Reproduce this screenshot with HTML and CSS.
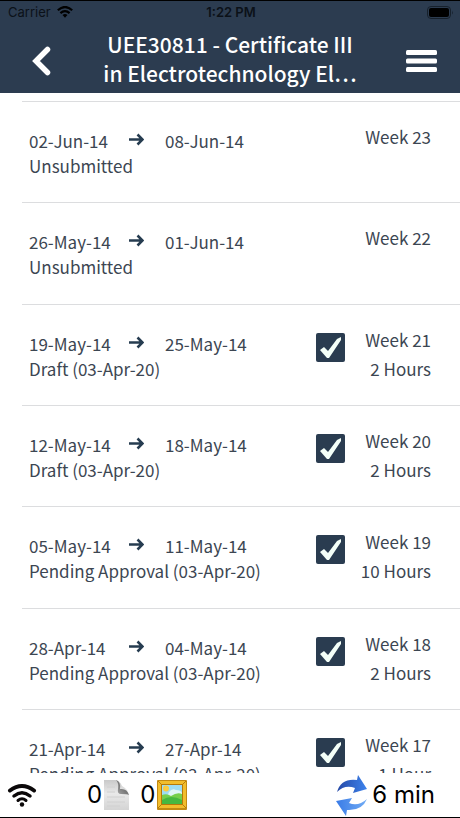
FILE: index.html
```html
<!DOCTYPE html>
<html lang="en">
<head>
<meta charset="utf-8">
<meta name="viewport" content="width=device-width, initial-scale=1">
<title>UEE30811 - Certificate III in Electrotechnology</title>
<link rel="stylesheet" href="styles.css">
</head>
<body>
<header class="top">
  <div class="status">
    <div class="carrier">Carrier
      <svg width="16" height="12" viewBox="0 0 16 12" aria-hidden="true"><g fill="none" stroke="#000" stroke-width="2.2"><path d="M.8 4.2Q8-2.2 15.2 4.2"/><path d="M3.4 7.1Q8 3 12.6 7.1"/></g><path d="M5.5 9.1Q8 7 10.5 9.1L8 11.8Z"/></svg>
    </div>
    <div class="clock">1:22 PM</div>
    <svg class="battery" width="27" height="13" viewBox="0 0 27 13" aria-hidden="true"><rect x=".5" y=".5" width="23" height="12" rx="3.5" fill="none" stroke="#17212c"/><rect x="2" y="2" width="20" height="9" rx="2"/><path d="M25 4.5Q26.5 6.5 25 8.500Z" fill="#17212c"/></svg>
  </div>
  <div class="nav">
    <button class="icon-button" aria-label="Back"><svg width="20" height="32" viewBox="0 0 20 32"><path d="M15.500 4.500L4 16L15.500 27.500" fill="none" stroke="#fff" stroke-width="5.500" stroke-linecap="round"/></svg></button>
    <h1>UEE30811 - Certificate III<br>in Electrotechnology El…</h1>
    <button class="icon-button menu" aria-label="Menu"><svg width="31" height="24" viewBox="0 0 31 24"><g fill="#fff"><rect y="1" width="31" height="5" rx="1.500"/><rect y="9.500" width="31" height="5" rx="1.500"/><rect y="18" width="31" height="5" rx="1.500"/></g></svg></button>
  </div>
</header>
<svg class="symbols" aria-hidden="true"><symbol id="arrow" viewBox="0 0 15 13"><path d="M0 6.500H13M8.500 1.500L13.500 6.500L8.500 11.500" fill="none" stroke="#263c50" stroke-width="2.600"/></symbol></svg>
<main>
  <ul class="weeks">
    <li><div class="period"><span>02-Jun-14</span><svg class="arrow"><use href="#arrow"/></svg><span>08-Jun-14</span><p>Unsubmitted</p></div><div class="total"><p>Week 23</p></div></li>
    <li><div class="period"><span>26-May-14</span><svg class="arrow"><use href="#arrow"/></svg><span>01-Jun-14</span><p>Unsubmitted</p></div><div class="total"><p>Week 22</p></div></li>
    <li><div class="period"><span>19-May-14</span><svg class="arrow"><use href="#arrow"/></svg><span>25-May-14</span><p>Draft (03-Apr-20)</p></div><input type="checkbox" id="w21" checked><div class="total"><label for="w21">Week 21</label><p>2 Hours</p></div></li>
    <li><div class="period"><span>12-May-14</span><svg class="arrow"><use href="#arrow"/></svg><span>18-May-14</span><p>Draft (03-Apr-20)</p></div><input type="checkbox" id="w20" checked><div class="total"><label for="w20">Week 20</label><p>2 Hours</p></div></li>
    <li><div class="period"><span>05-May-14</span><svg class="arrow"><use href="#arrow"/></svg><span>11-May-14</span><p>Pending Approval (03-Apr-20)</p></div><input type="checkbox" id="w19" checked><div class="total"><label for="w19">Week 19</label><p>10 Hours</p></div></li>
    <li><div class="period"><span>28-Apr-14</span><svg class="arrow"><use href="#arrow"/></svg><span>04-May-14</span><p>Pending Approval (03-Apr-20)</p></div><input type="checkbox" id="w18" checked><div class="total"><label for="w18">Week 18</label><p>2 Hours</p></div></li>
    <li><div class="period"><span>21-Apr-14</span><svg class="arrow"><use href="#arrow"/></svg><span>27-Apr-14</span><p>Pending Approval (03-Apr-20)</p></div><input type="checkbox" id="w17" checked><div class="total"><label for="w17">Week 17</label><p>1 Hour</p></div></li>
  </ul>
</main>
<footer class="sync">
  <svg class="signal" width="30" height="24" viewBox="0 0 30 24" aria-hidden="true"><g fill="none" stroke="#0b0809" stroke-linecap="round"><path d="M3 7.500Q15-1.500 27 7.500" stroke-width="4"/><path d="M7 13Q15 6.500 23 13" stroke-width="3.500"/><path d="M11 17.500Q15 14 19 17.500" stroke-width="3"/></g><circle cx="15" cy="21.500" r="2.200" fill="#0b0809"/></svg>
  <span class="count">0</span>
  <svg class="file" width="26" height="30" viewBox="0 0 26 30" aria-hidden="true"><defs><linearGradient id="paper" x2="0" y2="1"><stop stop-color="#c9c9c9"/><stop offset=".45" stop-color="#e9e9e9"/><stop offset="1" stop-color="#d4d4d4"/></linearGradient><linearGradient id="fold" x1="1" x2="0" y2="1"><stop stop-color="#444"/><stop offset="1" stop-color="#ababab"/></linearGradient></defs><path d="M0 0H12Q16 1 18 6Q24 9 25 15V30H0Z" fill="url(#paper)"/><path d="M12 0Q17 2 16 9Q23 8 25 15Q23 14 17 14Q13 14 14 9Q15 3 12 0Z" fill="url(#fold)"/><path d="M3 7H11M3 12H11M3 17H21M3 22H21M3 26H16" stroke="#d0d0d0"/></svg>
  <span class="count">0</span>
  <svg width="30" height="30" viewBox="0 0 30 30" aria-hidden="true"><rect width="30" height="30" rx="1" fill="#c28a12"/><rect x="1" y="1" width="28" height="27" fill="#f2bd2c"/><path d="M1 1L5 5M29 1L25 5M1 28L5 24M29 28L25 24" stroke="#b67c0d"/><rect x="4" y="4" width="22" height="21" fill="#b5790a"/><rect x="5" y="5" width="20" height="19" fill="#9edcf3"/><path d="M12 12Q15 8 19 10Q24 10 25 13V17H10Z" fill="#e1f5f7"/><circle cx="9" cy="8.500" r="3" fill="#fccc3f"/><path d="M5 15Q10 13 14 16Q20 12 25 14V24H5Z" fill="#76cf4c"/><path d="M5 20Q14 14 25 20V24H5Z" fill="#46b840"/></svg>
  <svg class="refresh" width="32" height="41" viewBox="0 0 32 41" aria-hidden="true"><defs><linearGradient id="up"><stop stop-color="#2548a5"/><stop offset="1" stop-color="#3d83ed"/></linearGradient><linearGradient id="down"><stop stop-color="#397be6"/><stop offset="1" stop-color="#72acf5"/></linearGradient></defs><path d="M1 17Q5 3 21 5L22 0L31 14L17 18L19 13Q9 9 1 17Z" fill="url(#up)"/><path d="M31 24Q26 36 11 35L10 41L0 26L16 23L13 28Q22 32 31 24Z" fill="url(#down)"/></svg>
  <span class="time">6 min</span>
</footer>
</body>
</html>
```
FILE: styles.css
```css
* { box-sizing: border-box; }
body {
  margin: 0;
  height: 100vh;
  display: flex;
  flex-direction: column;
  background: #fff;
  color: #3c4652;
  font: 17px/25px "Noto Sans CJK SC", sans-serif;
  border-bottom: 1px solid #000;
}
p, h1, ul { margin: 0; padding: 0; }
.symbols { display: none; }
.top {
  flex: none;
  background: #2c3c50;
  border-top: 1px solid #000;
  color: #fff;
}
.status {
  display: grid;
  grid-template-columns: 1fr auto 1fr;
  align-items: center;
  height: 22px;
  padding: 0 6px 0 8px;
  color: #0b1118;
  font: 13px/22px Inter, sans-serif;
}
.carrier { display: flex; align-items: center; gap: 6px; }
.clock { font-weight: 600; }
.battery { justify-self: end; }
.nav {
  display: grid;
  grid-template-columns: 84px 1fr 84px;
  align-items: center;
  padding: 7px 0 5px;
}
.nav h1 {
  justify-self: center;
  margin: 0 -10px;
  text-align: center;
  white-space: nowrap;
  font-size: 21px;
  line-height: 29px;
  font-weight: 500;
}
.icon-button {
  display: flex;
  justify-content: center;
  padding: 4px 0 0;
  border: 0;
  background: none;
}
.menu { padding-left: 6px; }
main { flex: 1; min-height: 0; overflow: hidden; padding-top: 8px; }
.weeks { list-style: none; margin-left: 22px; }
.weeks li {
  display: flex;
  align-items: flex-start;
  min-height: 101px;
  padding: 0 29px 0 7px;
  border-top: 1px solid #dcdddf;
}
.weeks li:nth-child(3n + 2) { min-height: 102px; }
.period {
  flex: 1;
  display: grid;
  grid-template-columns: 100px 36px 1fr;
  padding-top: 26px;
}
.period p { grid-column: 1 / -1; }
.arrow { width: 15px; height: 13px; margin-top: 5px; }
.weeks input {
  appearance: none;
  width: 29px;
  height: 29px;
  margin: 28px 0 0;
  border-radius: 2px;
  background: #2a3c50;
}
.weeks input:checked::before {
  content: "";
  display: block;
  width: 29px;
  height: 29px;
  background: #f4fff8;
  clip-path: polygon(4px 17px, 8px 14px, 12px 18px, 21px 6px, 25px 4px, 25px 7px, 13px 25px, 11px 25px);
}
.total {
  width: 86px;
  padding-top: 20px;
  text-align: right;
  line-height: 29px;
}
.sync {
  flex: none;
  display: flex;
  align-items: center;
  height: 44px;
  padding: 0 25px 0 7px;
  color: #000;
  font: 24px/44px Inter, sans-serif;
}
.signal { margin-right: 50px; }
.count { margin-right: 2px; }
.file { margin-right: 10px; }
.refresh { margin-left: auto; margin-right: 4px; }
```
